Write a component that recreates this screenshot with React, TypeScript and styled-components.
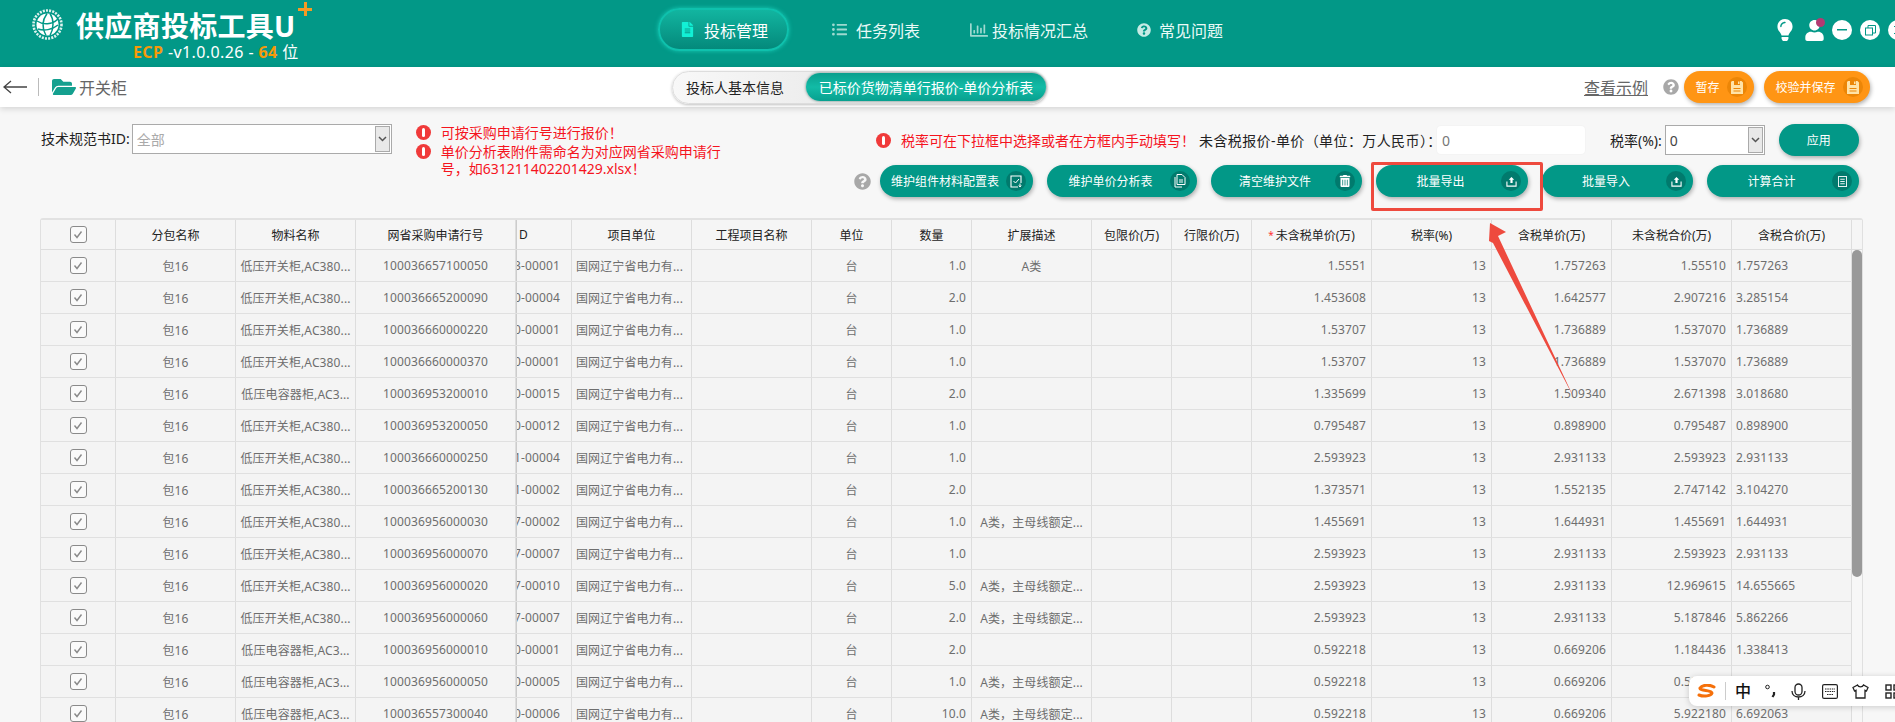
import React from "react";
import styled, { createGlobalStyle } from "styled-components";
import { FaFileAlt, FaListUl, FaRegChartBar, FaQuestionCircle, FaLightbulb, FaUser, FaTrashAlt, FaFolderOpen } from "react-icons/fa";

const Global = createGlobalStyle`
  html, body { margin: 0; padding: 0; background: #f7f7f7; }
  body { font-family: "Noto Sans", "Noto Sans CJK SC", sans-serif; }
  #root { width: 1895px; height: 722px; overflow: hidden; }
  * { box-sizing: border-box; }
`;

const Page = styled.div`
  position: relative;
  width: 1895px;
  height: 722px;
  overflow: hidden;
  background: #f7f7f7;
`;

/* ---------- header ---------- */
const Header = styled.header`
  height: 67px;
  background: #029887;
  display: flex;
  align-items: flex-start;
  color: #fff;
`;
const Brand = styled.div`
  width: 658px;
  flex-shrink: 0;
  display: flex;
  padding: 8px 0 0 32px;
`;
const BrandText = styled.div`
  margin-left: 13px;
  margin-top: 2px;
  display: flex;
  flex-direction: column;
`;
const BrandTitle = styled.div`
  font-size: 28px;
  line-height: 32px;
  font-weight: 700;
  white-space: nowrap;
  letter-spacing: 0.3px;
`;
const Plus = styled.span`
  position: absolute;
  left: 298px;
  top: 2px;
  width: 14px;
  height: 14px;
  background:
    linear-gradient(#f59a23, #f59a23) center / 14px 3px no-repeat,
    linear-gradient(#f59a23, #f59a23) center / 3px 14px no-repeat;
`;
const Version = styled.div`
  margin: 0 0 0 57px;
  font-size: 16px;
  line-height: 20px;
  white-space: nowrap;
  letter-spacing: 0.4px;
`;
const Accent = styled.b`
  color: #f59a0a;
  font-weight: 700;
`;
const Nav = styled.nav`
  display: flex;
  align-items: center;
  height: 43px;
  margin-top: 8px;
`;
const NavItem = styled.div<{ $active?: boolean; $w: number; $pad: number; $gap?: number }>`
  width: ${(p) => p.$w}px;
  height: 43px;
  padding-left: ${(p) => p.$pad}px;
  display: flex;
  align-items: center;
  gap: ${(p) => p.$gap ?? 9}px;
  font-size: 16px;
  white-space: nowrap;
  color: #eafaf7;
  border-radius: 22px;
  ${(p) =>
    p.$active &&
    `background: linear-gradient(180deg, #12b5a0 0%, #04897b 100%);
     border: 2px solid #0fc1ad;
     box-shadow: 0 0 4px #18c9b5;
     color: #fff;`}
  svg { flex-shrink: 0; }
`;
const WinActions = styled.div`
  margin-left: auto;
  margin-right: -21px;
  margin-top: 19px;
  height: 22px;
  display: flex;
  align-items: center;
  flex-shrink: 0;
`;
const UserWrap = styled.span`
  position: relative;
  display: flex;
  margin: 0 7px 0 8px;
`;
const UserDot = styled.i`
  position: absolute;
  right: 0;
  top: -2px;
  width: 9px;
  height: 9px;
  border-radius: 50%;
  background: #b33a72;
`;
const WinBtn = styled.span`
  width: 20px;
  height: 20px;
  border-radius: 50%;
  background: #fff;
  margin-right: 8px;
  display: flex;
  align-items: center;
  justify-content: center;
`;

/* ---------- toolbar ---------- */
const Toolbar = styled.div`
  height: 40px;
  background: #fff;
  box-shadow: 0 2px 6px rgba(0, 0, 0, 0.14);
  display: flex;
  align-items: center;
  position: relative;
`;
const Crumb = styled.div`
  width: 672px;
  display: flex;
  align-items: center;
  font-size: 16px;
  color: #666;
  padding-left: 3px;
`;
const CrumbSep = styled.i`
  width: 1px;
  height: 18px;
  background: #bbb;
  margin: 0 13px 0 11px;
`;
const CrumbName = styled.span`
  margin-left: 3px;
`;
const Segment = styled.div`
  width: 375px;
  height: 33px;
  border-radius: 17px;
  border: 1px solid #ddd;
  background: linear-gradient(90deg, #f8f8f8, #dcdcdc);
  box-shadow: 0 1px 3px rgba(0, 0, 0, 0.25);
  display: flex;
  align-items: center;
  justify-content: space-between;
  padding-left: 13px;
  font-size: 14px;
  color: #222;
  white-space: nowrap;
`;
const SegmentActive = styled.span`
  width: 240px;
  height: 28px;
  border-radius: 14px;
  background: linear-gradient(180deg, #0a9f8d, #12bba6 50%, #07a08f);
  color: #fff;
  display: flex;
  align-items: center;
  justify-content: center;
  box-shadow: 0 0 3px rgba(0, 60, 50, 0.6);
`;
const ToolRight = styled.div`
  margin-left: auto;
  padding-right: 25px;
  display: flex;
  align-items: center;
`;
const Example = styled.span`
  font-size: 16px;
  color: #666;
  text-decoration: underline;
  margin-right: 15px;
`;

/* ---------- buttons ---------- */
const Pill = styled.button<{ $w: number; $color?: string; $ml?: number; $mr?: number }>`
  width: ${(p) => p.$w}px;
  height: 32px;
  flex-shrink: 0;
  margin-left: ${(p) => p.$ml ?? 0}px;
  margin-right: ${(p) => p.$mr ?? 0}px;
  border: 0;
  border-radius: 16px;
  padding: 0 4px 0 4px;
  background: ${(p) => p.$color || "#029887"};
  color: #fff;
  font: 12px "Noto Sans", "Noto Sans CJK SC", sans-serif;
  display: flex;
  align-items: center;
  box-shadow: 1px 2px 4px rgba(0, 0, 0, 0.3);
`;
const PillLabel = styled.span`
  flex: 1;
  text-align: center;
  white-space: nowrap;
`;
const PillIcon = styled.span<{ $dark?: string }>`
  width: 20px;
  height: 20px;
  border-radius: 50%;
  background: ${(p) => p.$dark || "#017a6d"};
  display: flex;
  align-items: center;
  justify-content: center;
  margin-right: 3px;
  color: #fff;
  flex-shrink: 0;
`;

/* ---------- filter panel ---------- */
const Panel = styled.section`
  display: flex;
  height: 111px;
  padding: 17px 36px 0 41px;
`;
const FilterLeft = styled.div`
  display: flex;
  width: 835px;
  flex-shrink: 0;
`;
const Label = styled.label`
  font-size: 14px;
  line-height: 30px;
  color: #222;
  white-space: nowrap;
`;
const Select = styled.div<{ $w: number; $ml: number }>`
  width: ${(p) => p.$w}px;
  height: 30px;
  margin-left: ${(p) => p.$ml}px;
  background: #fff;
  border: 1px solid #aaa;
  display: flex;
  align-items: center;
  justify-content: space-between;
  padding: 0 1px 0 4px;
  font-size: 14px;
  flex-shrink: 0;
`;
const SelectValue = styled.span<{ $muted?: boolean }>`
  color: ${(p) => (p.$muted ? "#aaa" : "#444")};
`;
const SelectArrow = styled.span`
  width: 15px;
  height: 26px;
  background: #e9e9e9;
  border: 1px solid #aaa;
  display: flex;
  align-items: center;
  justify-content: center;
`;
const Alerts = styled.div`
  margin-left: 24px;
  width: 310px;
  display: flex;
  flex-direction: column;
  gap: 2px;
`;
const Alert = styled.div`
  display: flex;
  gap: 10px;
  color: #f5141e;
  font-size: 14px;
  line-height: 17px;
`;
const AlertDot = styled.i<{ $flat?: boolean }>`
  width: 15px;
  height: 15px;
  flex-shrink: 0;
  margin-top: ${(p) => (p.$flat ? 0 : 1)}px;
  border-radius: 50%;
  background: #f03a3a;
  display: flex;
  align-items: center;
  justify-content: center;
  &::after {
    content: "";
    width: 3px;
    height: 9px;
    border-radius: 2px;
    background: #fff;
  }
`;
const FilterRight = styled.div`
  flex: 1;
  min-width: 0;
  display: flex;
  flex-direction: column;
  gap: 9px;
`;
const RightRow = styled.div<{ $end?: boolean }>`
  height: 32px;
  display: flex;
  align-items: center;
  justify-content: ${(p) => (p.$end ? "flex-end" : "flex-start")};
`;
const ButtonRow = styled(RightRow)`
  gap: 14px;
`;
const AlertText = styled.span`
  color: #f5141e;
  font-size: 14px;
  margin-left: 10px;
  white-space: nowrap;
  width: 298px;
`;
const PriceLabel = styled.span`
  font-size: 14px;
  color: #222;
  white-space: nowrap;
  width: 238px;
  letter-spacing: 0.4px;
`;
const PriceInput = styled.div`
  width: 148px;
  height: 28px;
  background: #fff;
  border-radius: 4px;
  font-size: 14px;
  color: #777;
  display: flex;
  align-items: center;
  padding-left: 5px;
  box-shadow: 0 0 2px rgba(0, 0, 0, 0.06);
`;
const RateLabel = styled.span`
  font-size: 14px;
  color: #222;
  margin-left: 25px;
  white-space: nowrap;
`;
const Help = styled.span<{ $mr: number }>`
  color: #a8a8a8;
  display: flex;
  margin-right: ${(p) => p.$mr}px;
`;

/* ---------- table ---------- */
const Table = styled.section`
  margin: 0 32px 0 40px;
  display: flex;
  flex-direction: column;
  border-left: 1px solid #e0e0e0;
  border-top: 2px solid #e2e2e2;
  border-right: 1px solid #e0e0e0;
  border-radius: 3px 3px 0 0;
`;
const cols = "75px 120px 120px 160px 56px 120px 120px 80px 80px 120px 80px 80px 120px 120px 120px 120px 120px";
const HeadRow = styled.div`
  display: grid;
  grid-template-columns: ${cols} 1fr;
  height: 30px;
  background: #f5f5f5;
  border-bottom: 1px solid #ddd;
`;
const TableBody = styled.div`
  display: flex;
`;
const Rows = styled.div`
  width: 1811px;
  flex-shrink: 0;
`;
const Track = styled.div`
  flex: 1;
  background: #f7f7f7;
`;
const Thumb = styled.div`
  height: 327px;
  background: #999;
  border-radius: 5px;
`;
const Row = styled.div`
  display: grid;
  grid-template-columns: ${cols};
  height: 32px;
  background: #f4f4f4;
  border-bottom: 1px solid #e0e0e0;
`;
const HeadCell = styled.div<{ $clip?: boolean }>`
  font-size: 12px;
  color: #222;
  display: flex;
  align-items: center;
  justify-content: ${(p) => (p.$clip ? "flex-start" : "center")};
  padding-left: ${(p) => (p.$clip ? "2px" : "0")};
  border-right: 1px solid #ddd;
  white-space: nowrap;
  ${(p) => p.$clip && "border-left: 1px solid #ccc;"}
`;
const Star = styled.span`
  color: #f33;
  font-size: 10px;
  margin-right: 2px;
`;
const Cell = styled.div<{ $align?: "left" | "right" | "center" }>`
  font-size: 12px;
  letter-spacing: 0.12px;
  color: #6e6e6e;
  display: flex;
  align-items: center;
  justify-content: ${(p) => (p.$align === "right" ? "flex-end" : p.$align === "left" ? "flex-start" : "center")};
  padding: 0 ${(p) => (p.$align === "right" ? 5 : 4)}px 0 4px;
  border-right: 1px solid #ddd;
  white-space: nowrap;
  overflow: hidden;
`;
const ClipCell = styled(Cell)`
  justify-content: flex-end;
  padding: 0 11px 0 0;
  border-left: 1px solid #ccc;
`;
const Check = styled.span`
  width: 17px;
  height: 17px;
  border: 1.5px solid #8a8a8a;
  border-radius: 3px;
  background: #fafafa;
  display: flex;
  align-items: center;
  justify-content: center;
`;

/* ---------- overlays ---------- */
const Highlight = styled.div`
  position: absolute;
  left: 1371px;
  top: 162px;
  width: 172px;
  height: 49px;
  border: 3px solid #ee4a3e;
  border-radius: 2px;
  pointer-events: none;
`;
const ArrowSvg = styled.svg`
  position: absolute;
  left: 1480px;
  top: 215px;
`;
const Ime = styled.div`
  position: absolute;
  left: 1689px;
  top: 676px;
  width: 220px;
  height: 30px;
  background: #fff;
  border-radius: 8px;
  box-shadow: 0 1px 6px rgba(0, 0, 0, 0.18);
  display: flex;
  align-items: center;
  padding-left: 8px;
  color: #222;
`;
const ImeSep = styled.i`
  width: 1px;
  height: 18px;
  background: #ccc;
  margin: 0 9px 0 9px;
`;
const ImeChar = styled.span`
  font-size: 16px;
  font-weight: 500;
  width: 16px;
  line-height: 30px;
  color: #111;
`;
const ImeSlot = styled.span<{ $ml: number }>`
  display: flex;
  margin-left: ${(p) => p.$ml}px;
`;
const ChartLabel = styled.span`
  margin-left: -5px;
`;

/* ---------- drawings ---------- */
const Logo = () => (
  <svg width="31" height="33" viewBox="0 0 31 33" fill="none">
    <circle cx="15.5" cy="16.5" r="14" stroke="#dff3ef" strokeWidth="2.6" strokeDasharray="2 1.2" />
    <circle cx="15.5" cy="16.5" r="11" fill="#fff" />
    <path d="M5 13c6 4 15 4 21-2M6 21c6 2 14 1 20-4M15 5.500c-5 7-5 15-1 22M18 5.500c4 6 4 15 0 22" stroke="#029887" strokeWidth="1.500" />
  </svg>
);
const Floppy = () => (
  <svg width="12" height="13" viewBox="0 0 12 13">
    <path d="M1 0h2v4h6V0h1.500L12 1.500V13H0V1zM7 .5h1.500v2.500H7zM2.500 7v1h7V7zm0 2.500v1h7v-1z" fill="#ffe3a8" fillRule="evenodd" />
  </svg>
);
const TrayUp = () => (
  <svg width="11" height="11" viewBox="0 0 12 12" fill="none">
    <path d="M1 6v5h10V6" stroke="#fff" strokeWidth="1.200" />
    <path d="M6 1l3 3H7.200v3.500H4.800V4H3z" fill="#fff" />
  </svg>
);
const CheckDoc = () => (
  <svg width="13" height="13" viewBox="0 0 13 13" fill="none">
    <path d="M8 12H1V1h10v7" stroke="#fff" strokeWidth="1.100" />
    <path d="M3.500 6l2 2 3.500-4" stroke="#fff" strokeWidth="1" />
    <path d="M10 8.500v3M8.800 10.500l1.200 1.500 1.200-1.500" stroke="#fff" />
  </svg>
);
const CopyDoc = () => (
  <svg width="12" height="14" viewBox="0 0 12 14" fill="none" stroke="#fff" strokeWidth="1">
    <path d="M3 .5h5l3 3v7H3zM1 3v10h7" />
    <path d="M5 6h4M5 8h4" />
  </svg>
);
const Calc = () => (
  <svg width="9" height="11" viewBox="0 0 10 12" fill="none" stroke="#fff" strokeWidth="1">
    <rect x=".5" y=".5" width="9" height="11" />
    <path d="M2.500 3.500h5M2.500 6h5M2.500 8.500h5" />
  </svg>
);
const Chevron = () => (
  <svg width="9" height="6" viewBox="0 0 9 6" fill="none">
    <path d="M1 1l3.500 3.500L8 1" stroke="#555" strokeWidth="1.500" />
  </svg>
);
const BackArrow = () => (
  <svg width="24" height="14" viewBox="0 0 24 14" fill="none" stroke="#444" strokeWidth="1.300">
    <path d="M24 7H1M8 1L1 7l7 6" />
  </svg>
);
const Tick = () => (
  <svg width="10" height="9" viewBox="0 0 10 9" fill="none">
    <path d="M1.500 4.500L4 7.500 8.500 1.500" stroke="#8a8a8a" strokeWidth="1.400" />
  </svg>
);

const heads = ["分包名称", "物料名称", "网省采购申请行号"];
const heads2 = ["项目单位", "工程项目名称", "单位", "数量", "扩展描述", "包限价(万)", "行限价(万)"];
const heads3 = ["税率(%)", "含税单价(万)", "未含税合价(万)", "含税合价(万)"];

const S = "低压开关柜,AC380...";
const C = "低压电容器柜,AC3...";
const A = "A类，主母线额定...";
type R = [string, string, string, string, string, string, string, string, string];
const data: R[] = [
  [S, "100036657100050", "3-00001", "1.0", "A类", "1.5551", "1.757263", "1.55510", "1.757263"],
  [S, "100036665200090", "0-00004", "2.0", "", "1.453608", "1.642577", "2.907216", "3.285154"],
  [S, "100036660000220", "0-00001", "1.0", "", "1.53707", "1.736889", "1.537070", "1.736889"],
  [S, "100036660000370", "0-00001", "1.0", "", "1.53707", "1.736889", "1.537070", "1.736889"],
  [C, "100036953200010", "0-00015", "2.0", "", "1.335699", "1.509340", "2.671398", "3.018680"],
  [S, "100036953200050", "0-00012", "1.0", "", "0.795487", "0.898900", "0.795487", "0.898900"],
  [S, "100036660000250", "1-00004", "1.0", "", "2.593923", "2.931133", "2.593923", "2.931133"],
  [S, "100036665200130", "1-00002", "2.0", "", "1.373571", "1.552135", "2.747142", "3.104270"],
  [S, "100036956000030", "7-00002", "1.0", A, "1.455691", "1.644931", "1.455691", "1.644931"],
  [S, "100036956000070", "7-00007", "1.0", "", "2.593923", "2.931133", "2.593923", "2.931133"],
  [S, "100036956000020", "7-00010", "5.0", A, "2.593923", "2.931133", "12.969615", "14.655665"],
  [S, "100036956000060", "7-00007", "2.0", A, "2.593923", "2.931133", "5.187846", "5.862266"],
  [C, "100036956000010", "0-00001", "2.0", "", "0.592218", "0.669206", "1.184436", "1.338413"],
  [C, "100036956000050", "0-00005", "1.0", A, "0.592218", "0.669206", "0.592218", "0.669206"],
  [C, "100036557300040", "0-00006", "10.0", A, "0.592218", "0.669206", "5.922180", "6.692063"],
];

export default function App() {
  return (
    <Page>
      <Global />
      <Header>
        <Brand>
          <Logo />
          <BrandText>
            <BrandTitle>供应商投标工具U</BrandTitle>
            <Version>
              <Accent>ECP</Accent> -v1.0.0.26 - <Accent>64</Accent> 位
            </Version>
          </BrandText>
          <Plus />
        </Brand>
        <Nav>
          <NavItem $active $w={131} $pad={20}>
            <FaFileAlt size={15} color="#12f0d5" />
            投标管理
          </NavItem>
          <NavItem $w={181} $pad={43}>
            <FaListUl size={15} color="#9fd9d0" />
            任务列表
          </NavItem>
          <NavItem $w={167} $pad={0}>
            <FaRegChartBar size={18} color="#9fd9d0" />
            <ChartLabel>投标情况汇总</ChartLabel>
          </NavItem>
          <NavItem $w={120} $pad={0} $gap={8}>
            <FaQuestionCircle size={14} color="#c6ebe5" />
            常见问题
          </NavItem>
        </Nav>
        <WinActions>
          <FaLightbulb size={22} color="#fff" />
          <UserWrap>
            <FaUser size={21} color="#fff" />
            <UserDot />
          </UserWrap>
          <WinBtn>
            <svg width="10" height="2"><rect width="10" height="1.500" fill="#029887" /></svg>
          </WinBtn>
          <WinBtn>
            <svg width="11" height="11" viewBox="0 0 11 11" fill="none" stroke="#029887">
              <rect x=".5" y="3" width="7" height="7" />
              <path d="M3 3V.5h7.500V8H8" />
            </svg>
          </WinBtn>
          <WinBtn>
            <svg width="10" height="10" stroke="#029887"><path d="M1 1l8 8M9 1l-8 8" /></svg>
          </WinBtn>
        </WinActions>
      </Header>

      <Toolbar>
        <Crumb>
          <BackArrow />
          <CrumbSep />
          <FaFolderOpen size={24} color="#14a08f" />
          <CrumbName>开关柜</CrumbName>
        </Crumb>
        <Segment>
          投标人基本信息
          <SegmentActive>已标价货物清单行报价-单价分析表</SegmentActive>
        </Segment>
        <ToolRight>
          <Example>查看示例</Example>
          <Help $mr={5}><FaQuestionCircle size={16} /></Help>
          <Pill $w={70} $color="#ff9514" $mr={10}>
            <PillLabel>暂存</PillLabel>
            <PillIcon $dark="#ec8607"><Floppy /></PillIcon>
          </Pill>
          <Pill $w={106} $color="#ff9514">
            <PillLabel>校验并保存</PillLabel>
            <PillIcon $dark="#ec8607"><Floppy /></PillIcon>
          </Pill>
        </ToolRight>
      </Toolbar>

      <Panel>
        <FilterLeft>
          <Label>技术规范书ID:</Label>
          <Select $w={260} $ml={2}>
            <SelectValue $muted>全部</SelectValue>
            <SelectArrow><Chevron /></SelectArrow>
          </Select>
          <Alerts>
            <Alert><AlertDot /><span>可按采购申请行号进行报价！</span></Alert>
            <Alert><AlertDot /><span>单价分析表附件需命名为对应网省采购申请行号，如631211402201429.xlsx！</span></Alert>
          </Alerts>
        </FilterLeft>
        <FilterRight>
          <RightRow>
            <AlertDot $flat />
            <AlertText>税率可在下拉框中选择或者在方框内手动填写！</AlertText>
            <PriceLabel>未含税报价-单价（单位：万人民币）：</PriceLabel>
            <PriceInput>0</PriceInput>
            <RateLabel>税率(%):</RateLabel>
            <Select $w={100} $ml={3}>
              <SelectValue>0</SelectValue>
              <SelectArrow><Chevron /></SelectArrow>
            </Select>
            <Pill $w={80} $ml={14}><PillLabel>应用</PillLabel></Pill>
          </RightRow>
          <ButtonRow $end>
            <Help $mr={-5}><FaQuestionCircle size={17} /></Help>
            <Pill $w={153}><PillLabel>维护组件材料配置表</PillLabel><PillIcon><CheckDoc /></PillIcon></Pill>
            <Pill $w={150}><PillLabel>维护单价分析表</PillLabel><PillIcon><CopyDoc /></PillIcon></Pill>
            <Pill $w={151}><PillLabel>清空维护文件</PillLabel><PillIcon><FaTrashAlt size={12} /></PillIcon></Pill>
            <Pill $w={152}><PillLabel>批量导出</PillLabel><PillIcon><TrayUp /></PillIcon></Pill>
            <Pill $w={151}><PillLabel>批量导入</PillLabel><PillIcon><TrayUp /></PillIcon></Pill>
            <Pill $w={152}><PillLabel>计算合计</PillLabel><PillIcon><Calc /></PillIcon></Pill>
          </ButtonRow>
        </FilterRight>
      </Panel>

      <Table>
        <HeadRow>
          <HeadCell><Check><Tick /></Check></HeadCell>
          {heads.map((h) => <HeadCell key={h}>{h}</HeadCell>)}
          <HeadCell $clip>D</HeadCell>
          {heads2.map((h) => <HeadCell key={h}>{h}</HeadCell>)}
          <HeadCell><Star>*</Star>未含税单价(万)</HeadCell>
          {heads3.map((h) => <HeadCell key={h}>{h}</HeadCell>)}
          <div />
        </HeadRow>
        <TableBody>
          <Rows>
            {data.map((r) => (
              <Row key={r[1]}>
                <Cell><Check><Tick /></Check></Cell>
                <Cell>包16</Cell>
                <Cell>{r[0]}</Cell>
                <Cell>{r[1]}</Cell>
                <ClipCell>{r[2]}</ClipCell>
                <Cell $align="left">国网辽宁省电力有...</Cell>
                <Cell />
                <Cell>台</Cell>
                <Cell $align="right">{r[3]}</Cell>
                <Cell>{r[4]}</Cell>
                <Cell />
                <Cell />
                <Cell $align="right">{r[5]}</Cell>
                <Cell $align="right">13</Cell>
                <Cell $align="right">{r[6]}</Cell>
                <Cell $align="right">{r[7]}</Cell>
                <Cell $align="left">{r[8]}</Cell>
              </Row>
            ))}
          </Rows>
          <Track><Thumb /></Track>
        </TableBody>
      </Table>

      <Highlight />
      <ArrowSvg width="100" height="190" viewBox="0 0 100 190">
        <polygon points="10,8 26,17 18,21 94,183 13,28 9,26" fill="#ee4a3e" />
      </ArrowSvg>

      <Ime>
        <svg width="19" height="14" viewBox="0 0 19 14" fill="none">
          <path d="M17 3C12 0 5 1 3 4c-1 3 12 2 12 5-1 3-8 4-13 2" stroke="#f5700a" strokeWidth="3" strokeLinecap="round" />
        </svg>
        <ImeSep />
        <ImeChar>中</ImeChar>
        <ImeSlot $ml={14}>
          <svg width="11" height="14" viewBox="0 0 11 14" fill="none" stroke="#222">
            <circle cx="2.500" cy="3" r="1.800" />
            <path d="M9 8v2.500L7.500 13" strokeWidth="2.200" />
          </svg>
        </ImeSlot>
        <ImeSlot $ml={15}>
          <svg width="15" height="17" viewBox="0 0 15 17" fill="none" stroke="#222" strokeWidth="1.300">
            <rect x="4" y="1" width="7" height="11" rx="3.500" />
            <path d="M1 8c0 8 13 8 13 0M7.500 14v3" />
          </svg>
        </ImeSlot>
        <ImeSlot $ml={16}>
          <svg width="16" height="15" viewBox="0 0 16 15" fill="none" stroke="#222" strokeWidth="1.200">
            <rect x=".6" y=".6" width="14.800" height="13.800" rx="1.500" />
            <path d="M3 5h10M3 7.500h10M5 10.500h6" strokeDasharray="1.500 .8" />
          </svg>
        </ImeSlot>
        <ImeSlot $ml={14}>
          <svg width="17" height="15" viewBox="0 0 17 15" fill="none" stroke="#222" strokeWidth="1.300">
            <path d="M5.500 1L1 3.500 2.500 7 4 6.300V14h9V6.300L14.500 7 16 3.500 11.500 1c-1 2.500-5 2.500-6 0z" />
          </svg>
        </ImeSlot>
        <ImeSlot $ml={16}>
          <svg width="16" height="15" viewBox="0 0 16 15" fill="none" stroke="#222" strokeWidth="1.400">
            <rect x="1" y="1" width="5" height="5" />
            <rect x="9" y="1" width="5" height="5" />
            <rect x="1" y="9" width="5" height="5" />
            <rect x="9" y="9" width="5" height="5" />
          </svg>
        </ImeSlot>
      </Ime>
    </Page>
  );
}
